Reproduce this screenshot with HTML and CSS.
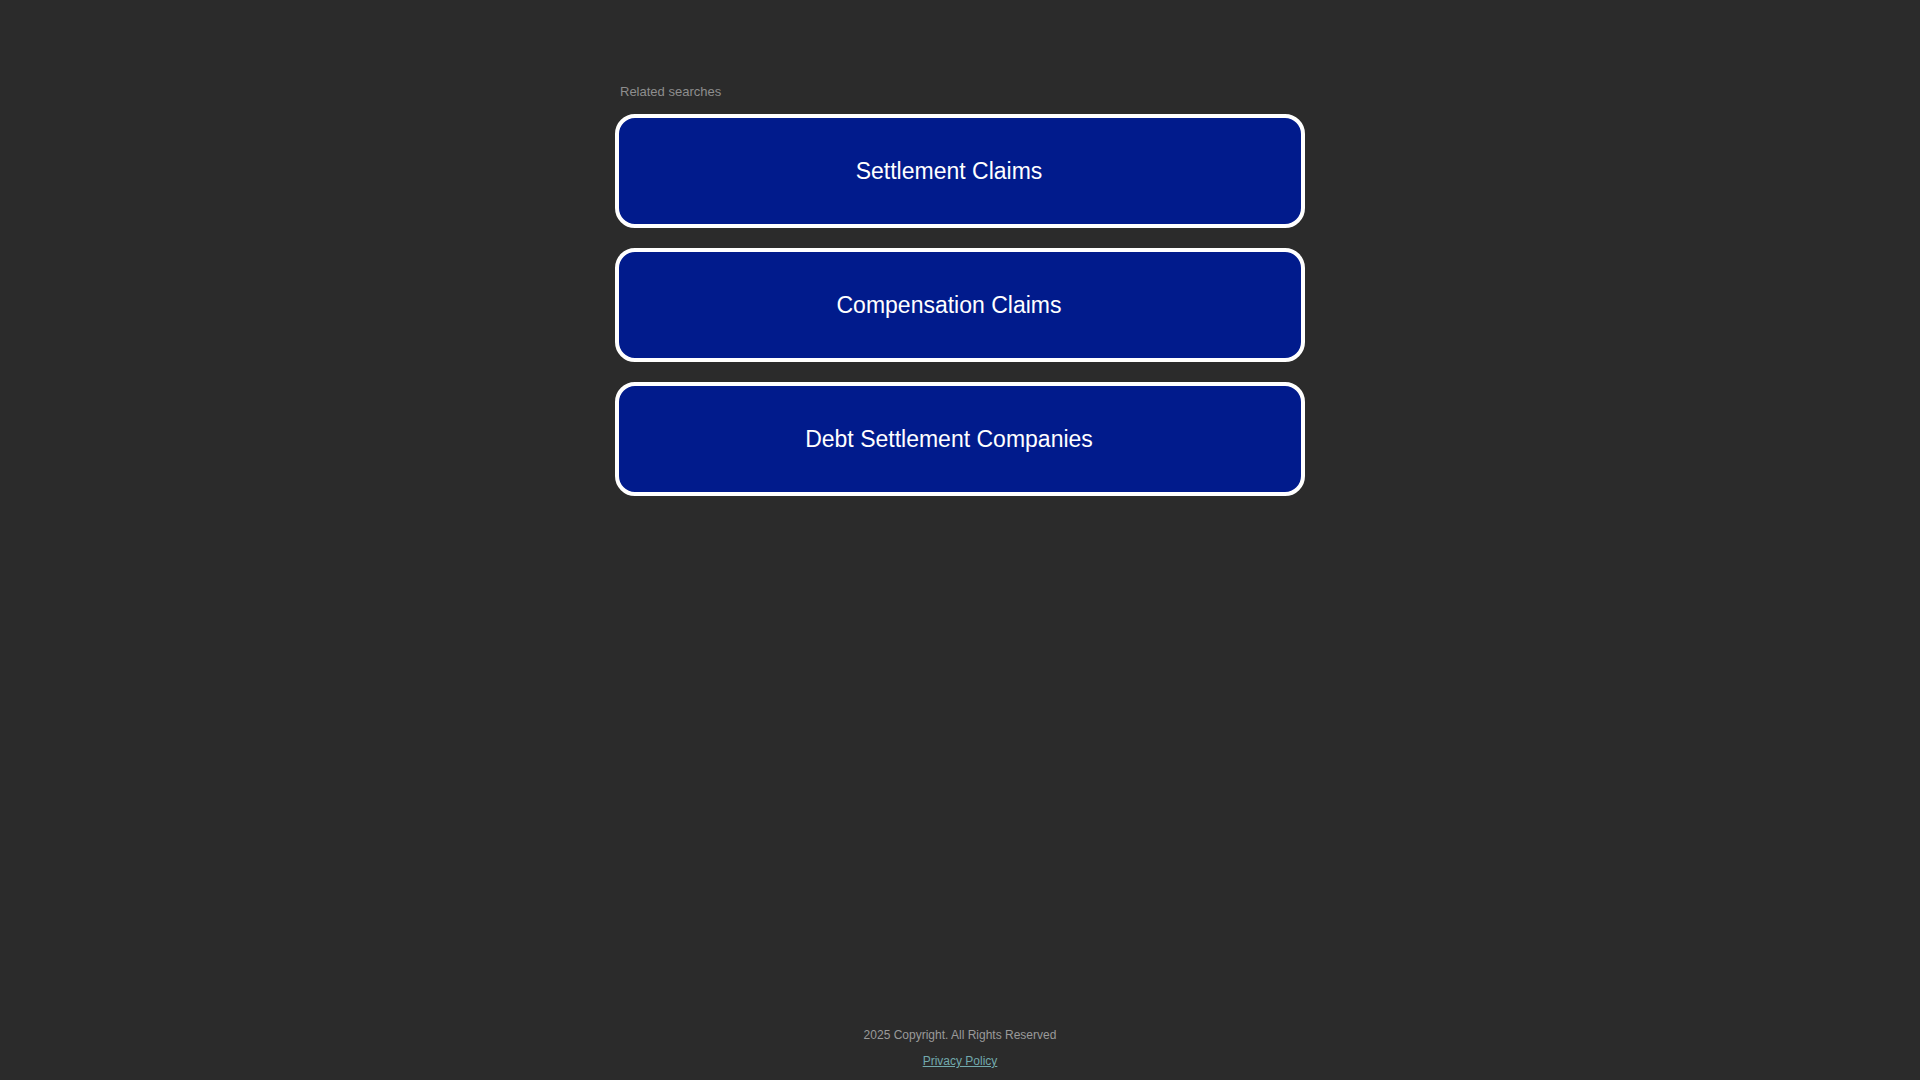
FILE: index.html
```html
<!DOCTYPE html>
<html lang="en">
<head>
<meta charset="utf-8">
<title>Related searches</title>
<link rel="stylesheet" href="styles.css">
</head>
<body>
<div class="page">
  <main class="content">
    <div class="label">Related searches</div>
    <div class="list">
      <a class="card" href="#"><span>Settlement Claims</span></a>
      <a class="card" href="#"><span>Compensation Claims</span></a>
      <a class="card" href="#"><span>Debt Settlement Companies</span></a>
    </div>
  </main>
  <footer class="footer">
    <div class="copy">2025 Copyright. All Rights Reserved</div>
    <a class="privacy" href="#">Privacy Policy</a>
  </footer>
</div>
</body>
</html>
```

FILE: styles.css
```css
html, body {
  margin: 0;
  padding: 0;
  height: 100%;
}
body {
  background: #2b2b2b;
  font-family: "Liberation Sans", Arial, sans-serif;
}
.page {
  min-height: 100vh;
  display: flex;
  flex-direction: column;
  box-sizing: border-box;
}
.content {
  width: 690px;
  margin: 0 auto;
  padding-top: 84px;
  flex: 1;
}
.label {
  font-size: 13px;
  line-height: 15px;
  color: #8e8e8e;
  padding-left: 5px;
  margin-bottom: 15px;
}
.list {
  display: flex;
  flex-direction: column;
  gap: 20px;
}
.card {
  box-sizing: border-box;
  height: 114px;
  border: 4px solid #ffffff;
  border-radius: 20px;
  background: #011b8c;
  color: #ffffff;
  text-decoration: none;
  display: flex;
  align-items: center;
  justify-content: center;
  padding-right: 22px;
  padding-top: 1px;
  font-size: 23px;
}
.footer {
  text-align: center;
  padding-bottom: 12px;
  font-size: 12px;
  line-height: 14px;
}
.copy {
  color: #9a9a9a;
  margin-bottom: 12px;
}
.privacy {
  color: #72a9ad;
  text-decoration: underline;
}
```
